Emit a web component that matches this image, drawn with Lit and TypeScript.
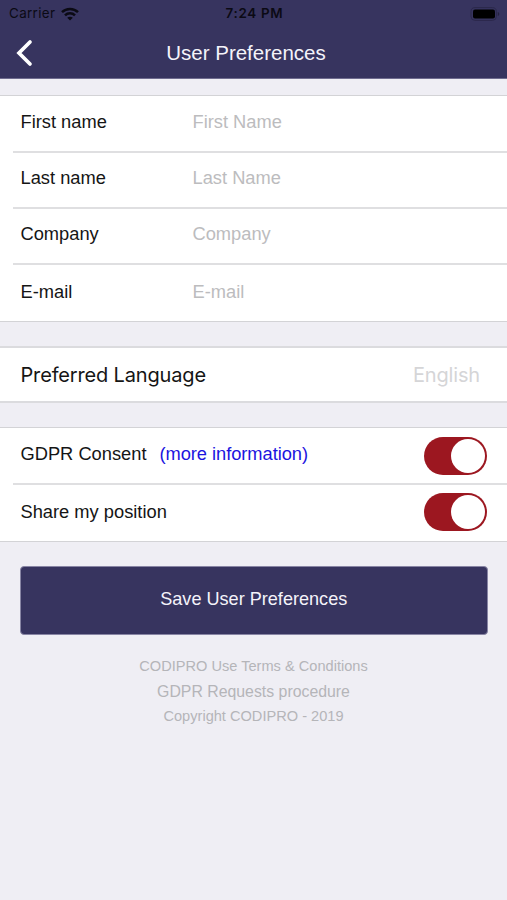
import { LitElement, html, css } from "lit";
import { customElement, state } from "lit/decorators.js";

@customElement("app-root")
export class AppRoot extends LitElement {
  static styles = css`
    :host {
      display: flex;
      flex-direction: column;
      box-sizing: border-box;
      width: 100%;
      height: 900px;
      overflow: hidden;
      background: #efeef4;
      color: #151515;
      font: 18.3px/24px "Liberation Sans", Arial, sans-serif;
      white-space: nowrap;
    }
    .header {
      height: 79px;
      background: #37345f;
      border-bottom: 1px solid #6f6c8f;
      box-sizing: border-box;
    }
    .status {
      height: 27px;
      display: grid;
      grid-template-columns: 1fr auto 1fr;
      align-items: center;
      padding: 0 7px 0 9px;
      font: 13.4px/27px Inter, sans-serif;
      color: #0b0a14;
    }
    .carrier { display: flex; align-items: center; gap: 6px; letter-spacing: 0.35px; }
    .time { font-weight: 600; letter-spacing: 0.7px; }
    .battery { justify-self: end; }
    svg { display: block; }
    .nav {
      height: 51px;
      display: grid;
      grid-template-columns: 60px 1fr 75px;
      align-items: center;
    }
    .back { margin-left: 16px; }
    .title { text-align: center; color: #f4f3fa; font-size: 20.5px; }
    .group { background: #fff; border-top: 1px solid #d3d3d6; border-bottom: 1px solid #d3d3d6; box-sizing: border-box; }
    .fields { margin-top: 16px; height: 227px; }
    .row { display: flex; align-items: center; box-sizing: border-box; height: 56px; margin-left: 13px; padding: 0 20px 4px 7.5px; }
    .row + .row { border-top: 2px solid #dfdfe1; }
    .row:first-child { height: 55px; }
    .fields .row:nth-child(4) { height: 58px; padding-bottom: 3px; }
    .label { width: 172px; }
    .hint { color: #bcbcbe; }
    .language { margin-top: 24px; height: 57px; border-top: 2px solid #dbdbde; border-bottom: 2px solid #dbdbde; }
    .language .row:first-child { height: 53px; padding: 0 27px 0 7.5px; justify-content: space-between; font-family: Inter, sans-serif; font-size: 20px; letter-spacing: -0.16px; }
    .choice { color: #d5d5d7; }
    .switches { margin-top: 24px; height: 115px; }
    .switches .row:last-child { height: 58px; padding-bottom: 3px; }
    .switches .row:first-child { padding-bottom: 4px; }
    .switches .row:first-child .toggle { margin-top: 4px; }
    .more { color: #1c14e0; margin-left: 13px; letter-spacing: -0.05px; }
    .toggle { margin-left: auto; box-sizing: border-box; width: 63px; height: 38px; border-radius: 19px; background: #9c1720; padding: 2px; display: flex; justify-content: flex-end; }
    .toggle.off { background: #ccc; justify-content: flex-start; }
    .knob { width: 34px; height: 34px; border-radius: 50%; background: #fff; }
    .save {
      margin: 24px 19.5px 0 20px;
      padding: 0 0 3px;
      height: 69px;
      flex: none;
      box-sizing: border-box;
      border: 1px solid #8885a4;
      border-radius: 4px;
      background: #37345f;
      color: #f4f3fa;
      font: 18.1px/24px "Liberation Sans", Arial, sans-serif;
    }
    .footer { margin-top: 19px; text-align: center; color: #b5b5b9; font-size: 14.6px; line-height: 25px; }
    .wide { font-size: 15.85px; }
  `;

  @state() private consent = true;
  @state() private share = true;

  private toggle(on: boolean, flip: () => void) {
    return html`<div class="toggle ${on ? "" : "off"}" role="switch" aria-checked=${on} @click=${flip}><div class="knob"></div></div>`;
  }

  render() {
    const fields = [
      ["First name", "First Name"],
      ["Last name", "Last Name"],
      ["Company", "Company"],
      ["E-mail", "E-mail"],
    ];
    return html`
      <div class="header">
        <div class="status">
          <div class="carrier">
            <span>Carrier</span>
            <svg width="18" height="14" viewBox="0 0 18 14" fill="none" stroke="#0b0a14" stroke-width="2.5">
              <path d="M1 5.2C5.4.8 12.6.8 17 5.2M4 8.3c2.8-2.8 7.2-2.8 10 0" />
              <path d="M9 13.6 6.2 10.8c1.5-1.5 4.1-1.5 5.6 0z" fill="#0b0a14" stroke="none" />
            </svg>
          </div>
          <div class="time">7:24 PM</div>
          <svg class="battery" width="30" height="14" viewBox="0 0 30 14">
            <rect x="1" y=".6" width="25.4" height="12.8" rx="4" fill="none" stroke="#2b284b" />
            <rect x="3" y="2.4" width="22" height="9.2" rx="2" fill="#000" />
            <path d="M27.8 5v4c2-.7 2-3.3 0-4z" fill="#25223f" />
          </svg>
        </div>
        <div class="nav">
          <svg class="back" width="18" height="28" viewBox="0 0 18 28">
            <path d="M14 3 3 14l11 11" fill="none" stroke="#fff" stroke-width="3.7" stroke-linecap="round" />
          </svg>
          <div class="title">User Preferences</div>
        </div>
      </div>
      <div class="group fields">
        ${fields.map(([label, hint]) => html`<div class="row"><span class="label">${label}</span><span class="hint">${hint}</span></div>`)}
      </div>
      <div class="group language">
        <div class="row"><span>Preferred Language</span><span class="choice">English</span></div>
      </div>
      <div class="group switches">
        <div class="row">
          <span>GDPR Consent</span><span class="more">(more information)</span>
          ${this.toggle(this.consent, () => (this.consent = !this.consent))}
        </div>
        <div class="row">
          <span>Share my position</span>
          ${this.toggle(this.share, () => (this.share = !this.share))}
        </div>
      </div>
      <button class="save">Save User Preferences</button>
      <div class="footer">
        <div>CODIPRO Use Terms &amp; Conditions</div>
        <div class="wide">GDPR Requests procedure</div>
        <div>Copyright CODIPRO - 2019</div>
      </div>
    `;
  }
}
